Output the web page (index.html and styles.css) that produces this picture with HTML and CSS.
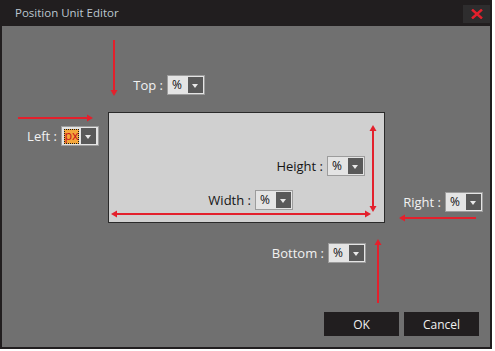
FILE: index.html
```html
<!DOCTYPE html>
<html>
<head>
<meta charset="utf-8">
<link rel="stylesheet" href="styles.css">
</head>
<body>
<div class="window">
  <div class="titlebar">
    <span class="title">Position Unit Editor</span>
    <button class="close" aria-label="Close">
      <svg width="12" height="10" viewBox="0 0 12 10"><path d="M1 0.5 L11 9.5 M11 0.5 L1 9.5" stroke="#e3202c" stroke-width="2.4" fill="none"/></svg>
    </button>
  </div>
  <div class="canvas">
    <div class="box"></div>
    <svg class="arrows" width="488" height="323" viewBox="2 26 488 323">
      <g fill="#e3202c" stroke="none">
        <rect x="113" y="40" width="2" height="52"/>
        <polygon points="110.5,90 117.5,90 114,96"/>
        <rect x="18" y="117" width="70" height="2"/>
        <polygon points="87,114.5 87,121.5 93,118"/>
        <rect x="372" y="129" width="2" height="79"/>
        <polygon points="369.5,131 376.5,131 373,125"/>
        <polygon points="369.5,206 376.5,206 373,212"/>
        <rect x="115" y="213" width="252" height="2"/>
        <polygon points="117,210.5 117,217.5 111,214"/>
        <polygon points="365,210.5 365,217.5 371,214"/>
        <rect x="403" y="217" width="73" height="2"/>
        <polygon points="405,214.5 405,221.5 399,218"/>
        <rect x="377" y="244" width="2" height="59"/>
        <polygon points="374.5,245 381.5,245 378,239"/>
      </g>
    </svg>

    <div class="field f-top"><span class="lbl">Top :</span><div class="sel"><span class="val">%</span><span class="dd"></span></div></div>
    <div class="field f-left"><span class="lbl">Left :</span><div class="sel"><span class="val focus">px</span><span class="dd"></span></div></div>
    <div class="field f-height dark"><span class="lbl">Height :</span><div class="sel"><span class="val">%</span><span class="dd"></span></div></div>
    <div class="field f-width dark"><span class="lbl">Width :</span><div class="sel"><span class="val">%</span><span class="dd"></span></div></div>
    <div class="field f-right"><span class="lbl">Right :</span><div class="sel"><span class="val">%</span><span class="dd"></span></div></div>
    <div class="field f-bottom"><span class="lbl">Bottom :</span><div class="sel"><span class="val">%</span><span class="dd"></span></div></div>

    <div class="buttons">
      <button class="btn">OK</button>
      <button class="btn">Cancel</button>
    </div>
  </div>
</div>
</body>
</html>
```
FILE: styles.css
```css
* { box-sizing: border-box; }
html, body { margin: 0; padding: 0; background: #ffffff; }
body { font-family: "Open Sans", "Noto Sans", sans-serif; font-size: 12px; }

.window {
  width: 492px;
  height: 349px;
  background: #707070;
  border: 2px solid #211e1f;
  border-top: 0;
  display: flex;
  flex-direction: column;
}

.titlebar {
  height: 26px;
  flex: 0 0 26px;
  background: #211e1f;
  display: flex;
  align-items: center;
  margin: 0 -2px;
  padding-left: 15px;
  padding-right: 2px;
}
.title {
  color: #bcc7d0;
  font-size: 11.5px;
  margin-top: -1px;
}
.close {
  margin-left: auto;
  align-self: flex-start;
  margin-top: 5px;
  width: 27px;
  height: 18px;
  border: 0;
  padding: 0;
  background: #2e2d2e;
  display: flex;
  align-items: center;
  justify-content: center;
}

.canvas {
  position: relative;
  flex: 1;
  display: flex;
  justify-content: flex-end;
  align-items: flex-end;
  padding: 0 11px 11px 0;
}

.box {
  position: absolute;
  left: 106px;
  top: 86px;
  width: 277px;
  height: 111px;
  background: #d0d0d0;
  border: 1px solid #2a2a2a;
}

.arrows {
  position: absolute;
  left: 0;
  top: 0;
}

.field {
  position: absolute;
  display: flex;
  align-items: center;
  gap: 4px;
  color: #f2f2f2;
  font-size: 13px;
}
.field.dark { color: #151515; }

.lbl { white-space: nowrap; }

.sel {
  width: 38px;
  height: 20px;
  border: 1px solid #9c9c9c;
  background: #e4e4e4;
  padding: 1px;
  display: flex;
}
.val {
  flex: 1;
  color: #111;
  font-size: 12px;
  line-height: 16px;
  padding-left: 3px;
}
.val.focus {
  flex: 0 0 15px;
  height: 15px;
  margin: 1px 2px 0 1px;
  padding: 0;
  background: #f5a73a;
  color: #c8141c;
  line-height: 14px;
  text-align: center;
  outline: 1px dotted #1a1a1a;
  outline-offset: -1px;
  font-size: 12.5px;
}
.dd {
  width: 15px;
  height: 16px;
  background: #595959;
  position: relative;
}
.dd::after {
  content: "";
  position: absolute;
  left: 4px;
  top: 7px;
  border-left: 3.5px solid transparent;
  border-right: 3.5px solid transparent;
  border-top: 4px solid #e8e8e8;
}

/* diagram nodes: select right edge anchored (canvas inner right = x 490) */
.f-top    { right: 285px; top: 49px; }
.f-left   { right: 391px; top: 100px; }
.f-height { right: 125px; top: 130px; }
.f-width  { right: 197px; top: 164px; }
.f-right  { right: 7px;   top: 166px; }
.f-bottom { right: 124px; top: 217px; }

.buttons {
  display: flex;
  gap: 5px;
}
.btn {
  width: 75px;
  height: 24px;
  border: 0;
  background: #211e1f;
  color: #f0f0f0;
  font-family: "Open Sans", "Noto Sans", sans-serif;
  font-size: 12px;
  padding: 0;
}
```
